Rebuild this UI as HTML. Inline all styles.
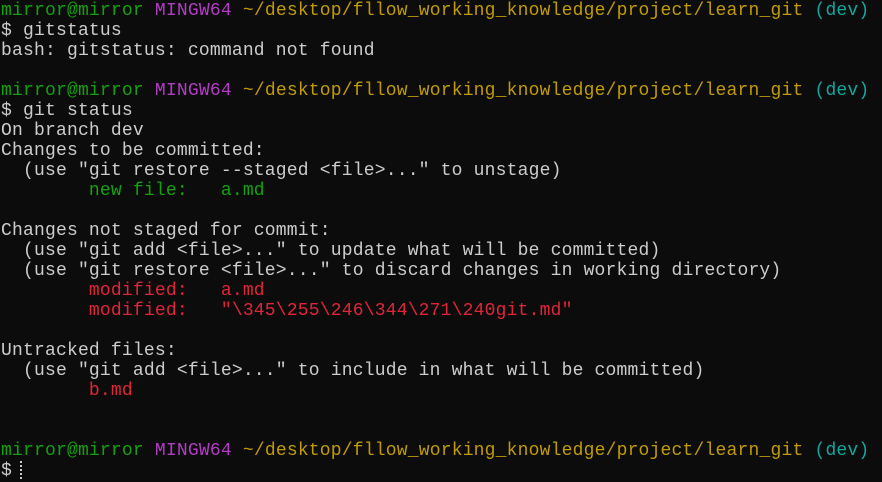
<!DOCTYPE html>
<html><head><style>
html,body{margin:0;padding:0;background:#0c0c0c;width:882px;height:482px;overflow:hidden}
pre{margin:0;padding:1px 0 0 1px;font-family:"Liberation Mono",monospace;font-size:18px;line-height:20px;color:#cccccc;letter-spacing:0.19px}
.g{color:#13a10e}.p{color:#b33bc6}.y{color:#c19c00}.c{color:#11a8a0}.r{color:#e02538}
.cur{display:inline-block;width:2px;height:18px;border-left:2px dotted #ccc;vertical-align:-4px;margin-left:8px}
</style></head><body><pre><span class="g">mirror@mirror</span> <span class="p">MINGW64</span> <span class="y">~/desktop/fllow_working_knowledge/project/learn_git</span> <span class="c">(dev)</span>
$ gitstatus
bash: gitstatus: command not found

<span class="g">mirror@mirror</span> <span class="p">MINGW64</span> <span class="y">~/desktop/fllow_working_knowledge/project/learn_git</span> <span class="c">(dev)</span>
$ git status
On branch dev
Changes to be committed:
  (use "git restore --staged &lt;file&gt;..." to unstage)
<span class="g">        new file:   a.md</span>

Changes not staged for commit:
  (use "git add &lt;file&gt;..." to update what will be committed)
  (use "git restore &lt;file&gt;..." to discard changes in working directory)
<span class="r">        modified:   a.md</span>
<span class="r">        modified:   "\345\255\246\344\271\240git.md"</span>

Untracked files:
  (use "git add &lt;file&gt;..." to include in what will be committed)
<span class="r">        b.md</span>


<span class="g">mirror@mirror</span> <span class="p">MINGW64</span> <span class="y">~/desktop/fllow_working_knowledge/project/learn_git</span> <span class="c">(dev)</span>
$<span class="cur"></span></pre></body></html>
